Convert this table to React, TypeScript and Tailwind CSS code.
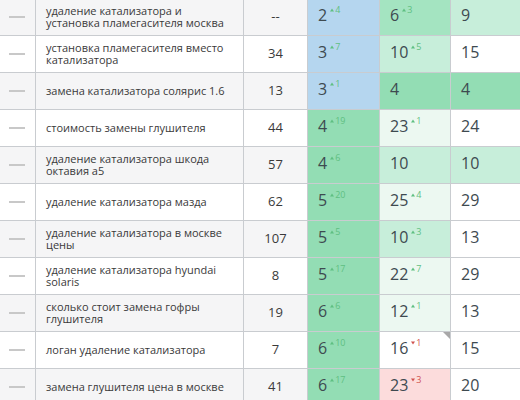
import React from "react";

type Tone = "blue" | "strong" | "medium" | "light" | "vlight" | "pink" | "white";
type Cell = { v: string; d?: number; up?: boolean; tone: Tone; corner?: boolean };
type Row = { q: string; n: string; a: Cell; b: Cell; c: Cell };

const toneCls: Record<Tone, string> = {
  blue: "bg-[#b5d6ef]",
  strong: "bg-[#93ddb4]",
  medium: "bg-[#a4e4c1]",
  light: "bg-[#c7eeda]",
  vlight: "bg-[#ecf8f1]",
  pink: "bg-[#fcdcdc]",
  white: "bg-white",
};

const rows: Row[] = [
  { q: "удаление катализатора и установка пламегасителя москва", n: "--", a: { v: "2", d: 4, up: true, tone: "blue" }, b: { v: "6", d: 3, up: true, tone: "medium" }, c: { v: "9", tone: "light" } },
  { q: "установка пламегасителя вместо катализатора", n: "34", a: { v: "3", d: 7, up: true, tone: "blue" }, b: { v: "10", d: 5, up: true, tone: "light" }, c: { v: "15", tone: "white" } },
  { q: "замена катализатора солярис 1.6", n: "13", a: { v: "3", d: 1, up: true, tone: "blue" }, b: { v: "4", tone: "strong" }, c: { v: "4", tone: "strong" } },
  { q: "стоимость замены глушителя", n: "44", a: { v: "4", d: 19, up: true, tone: "strong" }, b: { v: "23", d: 1, up: true, tone: "vlight" }, c: { v: "24", tone: "white" } },
  { q: "удаление катализатора шкода октавия а5", n: "57", a: { v: "4", d: 6, up: true, tone: "strong" }, b: { v: "10", tone: "light" }, c: { v: "10", tone: "light" } },
  { q: "удаление катализатора мазда", n: "62", a: { v: "5", d: 20, up: true, tone: "strong" }, b: { v: "25", d: 4, up: true, tone: "vlight" }, c: { v: "29", tone: "white" } },
  { q: "удаление катализатора в москве цены", n: "107", a: { v: "5", d: 5, up: true, tone: "strong" }, b: { v: "10", d: 3, up: true, tone: "light" }, c: { v: "13", tone: "white" } },
  { q: "удаление катализатора hyundai solaris", n: "8", a: { v: "5", d: 17, up: true, tone: "strong" }, b: { v: "22", d: 7, up: true, tone: "vlight" }, c: { v: "29", tone: "white" } },
  { q: "сколько стоит замена гофры глушителя", n: "19", a: { v: "6", d: 6, up: true, tone: "strong" }, b: { v: "12", d: 1, up: true, tone: "vlight" }, c: { v: "13", tone: "white" } },
  { q: "логан удаление катализатора", n: "7", a: { v: "6", d: 10, up: true, tone: "strong" }, b: { v: "16", d: 1, up: false, tone: "white", corner: true }, c: { v: "15", tone: "white" } },
  { q: "замена глушителя цена в москве", n: "41", a: { v: "6", d: 17, up: true, tone: "strong" }, b: { v: "23", d: 3, up: false, tone: "pink" }, c: { v: "20", tone: "white" } },
];

function Pos({ cell, last }: { cell: Cell; last?: boolean }) {
  return (
    <div
      className={`relative ${toneCls[cell.tone]} ${last ? "" : "border-r border-[#c9ccd0]"} pl-[10px] pt-[6px]`}
    >
      <div className="flex items-start">
        <span className="text-[16px] leading-[20px] text-[#3e4a50]">{cell.v}</span>
        {cell.d !== undefined && (
          <span
            className={`ml-[3px] flex items-center text-[9px] leading-[10px] ${
              cell.up ? "text-[#5fbf82]" : "text-[#d0534f]"
            }`}
          >
            <svg width="4" height="4" viewBox="0 0 4 4" className="mr-[1px]">
              {cell.up ? (
                <path d="M2 0.5 L4 3.5 L0 3.5 Z" fill="currentColor" />
              ) : (
                <path d="M0 0.5 L4 0.5 L2 3.5 Z" fill="currentColor" />
              )}
            </svg>
            {cell.d}
          </span>
        )}
      </div>
      {cell.corner && (
        <div className="absolute right-0 top-0 h-0 w-0 border-l-[7px] border-t-[7px] border-l-transparent border-t-[#a8a8a8]" />
      )}
    </div>
  );
}

export default function App() {
  return (
    <div
      className="h-[400px] w-[520px] overflow-hidden bg-white"
      style={{ fontFamily: '"Open Sans", "Noto Sans", sans-serif' }}
    >
      <div className="-mt-[1px]">
        {rows.map((r, i) => {
          const bg = i % 2 === 0 ? "bg-[#f5f5f6]" : "bg-white";
          return (
            <div
              key={i}
              className="grid h-[37px] grid-cols-[36px_208px_64px_72px_71px_1fr] border-b border-[#c9ccd0]"
            >
              <div className={`${bg} flex items-center border-r border-[#c9ccd0] pl-[9px]`}>
                <div className="h-[2px] w-[16px] bg-[#c8c8c8]" />
              </div>
              <div
                className={`${bg} flex items-center border-r border-[#c9ccd0] pl-[10px] pr-[6px] text-[11px] leading-[12px] text-[#3a3a3a]`}
              >
                <span>{r.q}</span>
              </div>
              <div
                className={`${bg} flex items-center justify-center border-r border-[#c9ccd0] text-[13px] text-[#3a3a3a]`}
              >
                {r.n}
              </div>
              <Pos cell={r.a} />
              <Pos cell={r.b} />
              <Pos cell={r.c} last />
            </div>
          );
        })}
      </div>
    </div>
  );
}
